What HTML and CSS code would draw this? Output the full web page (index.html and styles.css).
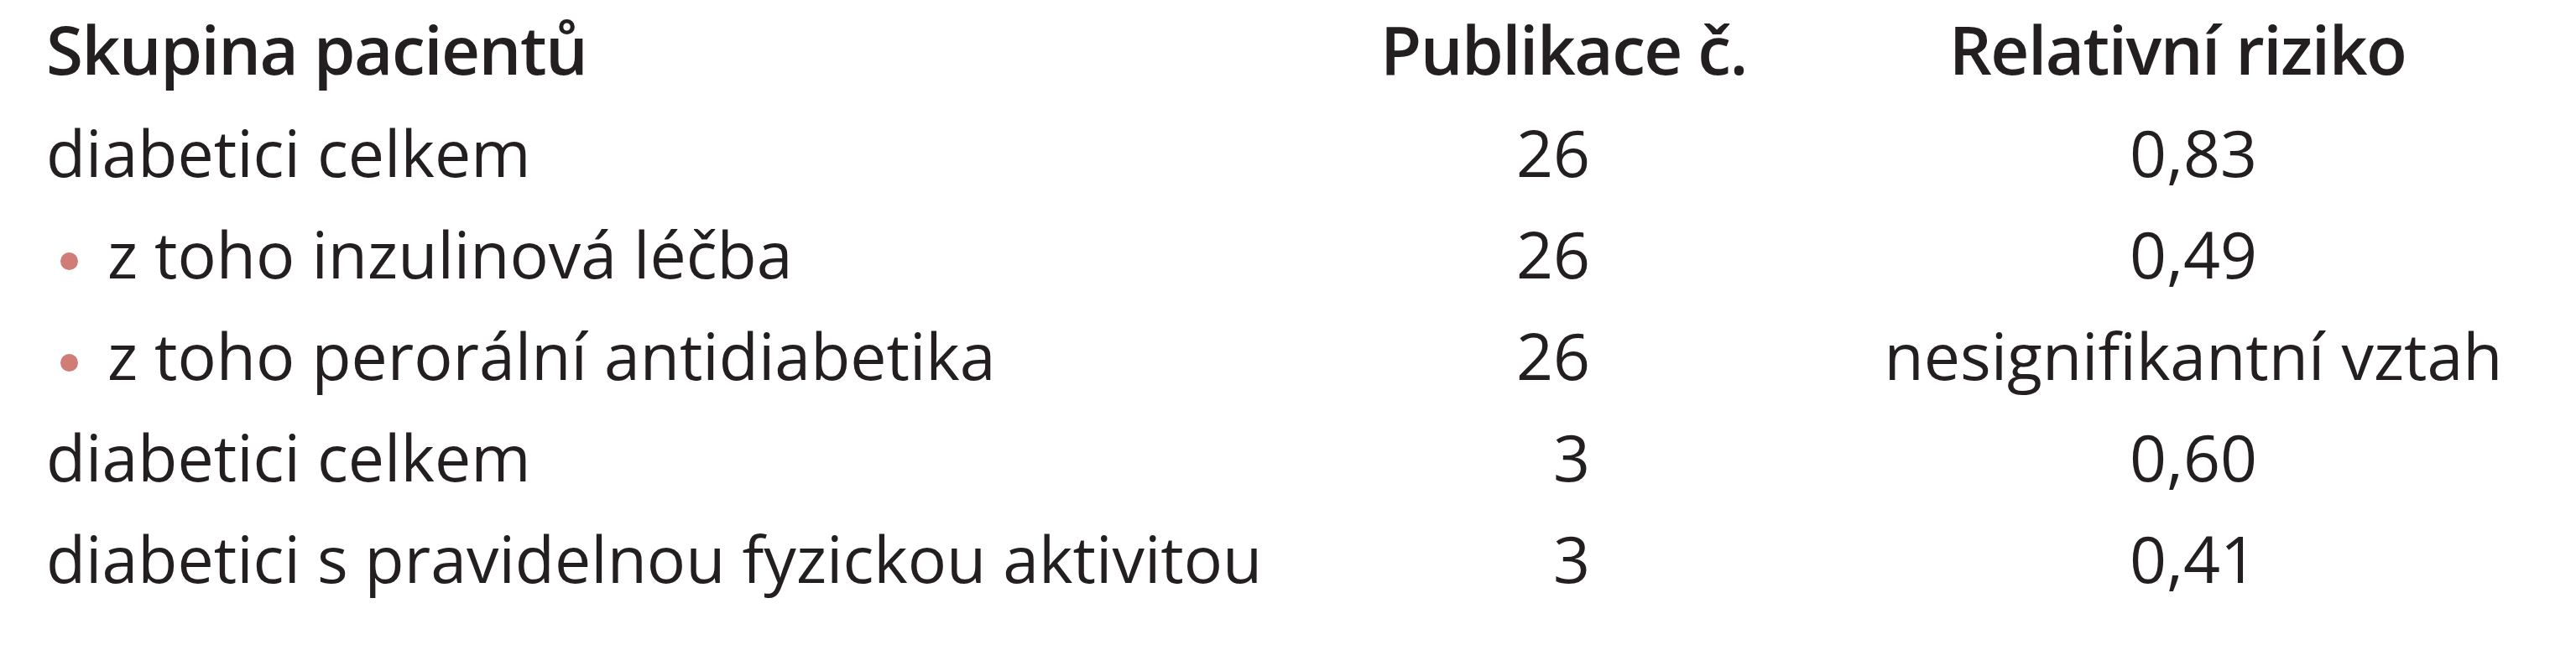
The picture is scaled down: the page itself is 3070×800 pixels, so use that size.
FILE: index.html
```html
<!DOCTYPE html>
<html lang="cs">
<head>
<meta charset="utf-8">
<title>Tabulka</title>
<link rel="stylesheet" href="styles.css">
</head>
<body>
<div class="table">
  <div class="row head">
    <div class="c1">Skupina pacientů</div>
    <div class="c2">Publikace č.</div>
    <div class="c3">Relativní riziko</div>
  </div>
  <div class="row">
    <div class="c1">diabetici celkem</div>
    <div class="c2 num">26</div>
    <div class="c3">0,83</div>
  </div>
  <div class="row">
    <div class="c1 sub">z toho inzulinová léčba</div>
    <div class="c2 num">26</div>
    <div class="c3">0,49</div>
  </div>
  <div class="row">
    <div class="c1 sub">z toho perorální antidiabetika</div>
    <div class="c2 num">26</div>
    <div class="c3">nesignifikantní vztah</div>
  </div>
  <div class="row">
    <div class="c1">diabetici celkem</div>
    <div class="c2 num">3</div>
    <div class="c3">0,60</div>
  </div>
  <div class="row">
    <div class="c1">diabetici s pravidelnou fyzickou aktivitou</div>
    <div class="c2 num">3</div>
    <div class="c3">0,41</div>
  </div>
</div>
</body>
</html>
```

FILE: styles.css
```css
html, body {
  margin: 0;
  padding: 0;
  background: #ffffff;
}

.table {
  font-family: "Open Sans", "Noto Sans", sans-serif;
  font-size: 77px;
  color: #231f20;
  padding-left: 55px;
  width: 2985px;
}

.row {
  display: grid;
  grid-template-columns: 1590px 560px 840px;
  height: 121px;
  line-height: 121px;
  white-space: nowrap;
}

.row.head {
  height: 124px;
  margin-top: -3px;
  font-size: 80px;
  font-weight: 600;
  letter-spacing: -1.5px;
}

.c2.num {
  text-align: right;
  padding-right: 310px;
}

.c3 {
  text-align: center;
  padding-right: 22px;
}

.head .c3 {
  padding-right: 60px;
}

.sub {
  display: flex;
  align-items: baseline;
  padding-left: 17px;
}

.sub::before {
  content: "";
  width: 21px;
  height: 21px;
  border-radius: 50%;
  background: #cf7d76;
  margin-right: 35px;
  position: relative;
  top: -10px;
}
```
